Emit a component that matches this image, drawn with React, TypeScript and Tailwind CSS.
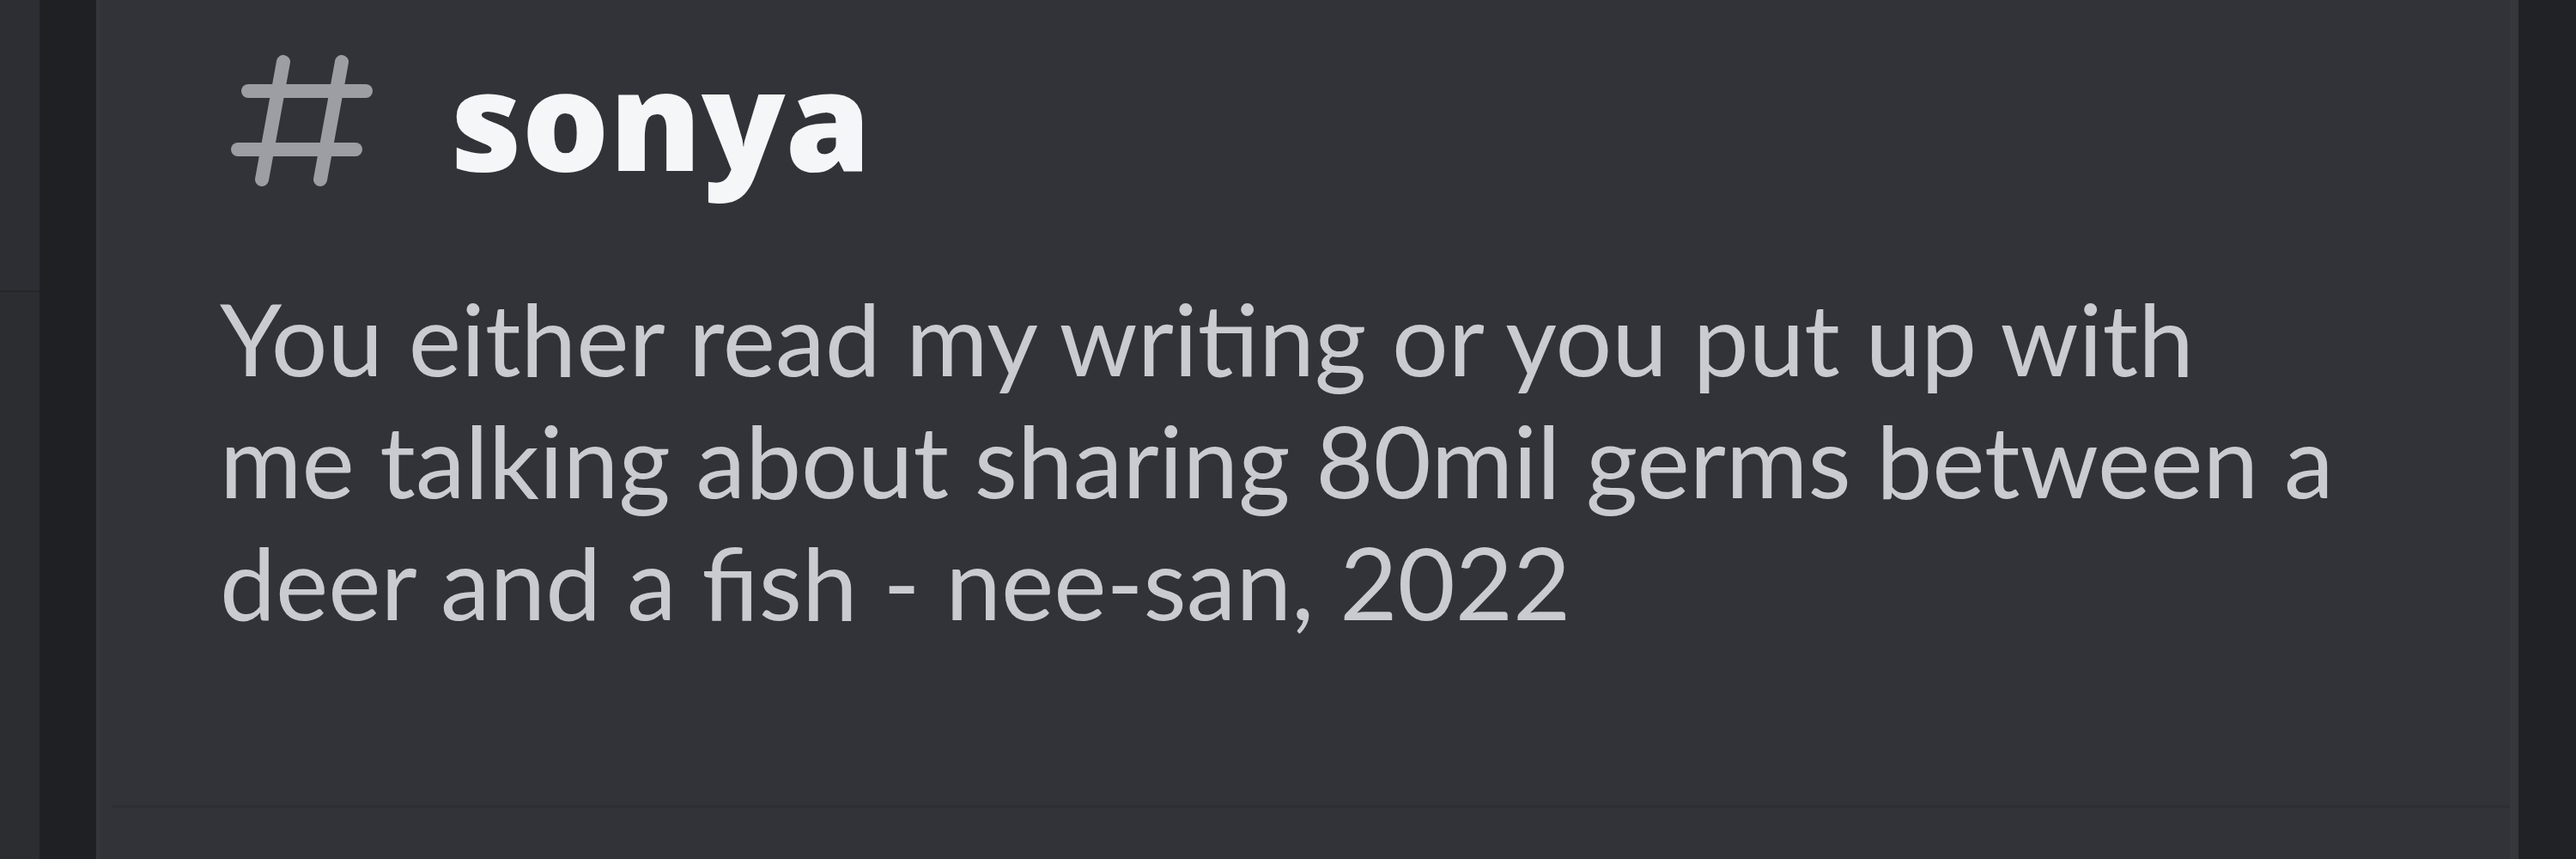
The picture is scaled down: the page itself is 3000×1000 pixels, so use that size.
import React from 'react';

const HashIcon = () => (
  <svg viewBox="0 0 167 155" className="w-[167px] h-[155px] shrink-0" fill="none" stroke="#9c9ea4" strokeWidth="16" strokeLinecap="round">
    <line x1="62" y1="9" x2="37" y2="146" />
    <line x1="130" y1="9" x2="105" y2="146" />
    <line x1="21" y1="43" x2="158" y2="43" />
    <line x1="9" y1="111" x2="146" y2="111" />
  </svg>
);

const App = () => {
  return (
    <div className="w-[3000px] h-[1000px] flex overflow-hidden bg-[#1f2023]">
      {/* server list edge */}
      <div className="w-[46px] flex flex-col bg-[#2b2d31]">
        <div className="h-[340px] bg-[#2c2e33] border-b-2 border-[#24262a]" />
        <div className="flex-1" />
      </div>
      <div className="w-[66px] bg-[#1f2023]" />

      {/* channel intro */}
      <main className="flex-1 flex flex-col bg-[#313338] border-l-4 border-[#34363b] border-r-[10px] border-r-[#35373c]">
        <div className="flex-1 pl-[152px] pt-[63px]" style={{ fontFamily: 'Lato, "Open Sans", sans-serif' }}>
          <div className="flex items-center gap-[90px]">
            <HashIcon />
            <h1 className="text-[160px] leading-none font-extrabold text-[#f5f6f7] -mt-[8px]" style={{ fontFamily: '"Open Sans", "Noto Sans", sans-serif' }}>
              sonya
            </h1>
          </div>
          <p className="mt-[105px] -ml-[12px] text-[116px] leading-[142px] text-[#c9cbd0]">
            You either read my writing or you put up with
            <br />
            me talking about sharing 80mil germs between a
            <br />
            deer and a fish - nee-san, 2022
          </p>
        </div>
        <div className="h-[63px] ml-[14px] border-t-4 border-[#2d2f34] bg-[#313338]" />
      </main>
      <div className="w-[67px] bg-[#212226]" />
    </div>
  );
};

export default App;
